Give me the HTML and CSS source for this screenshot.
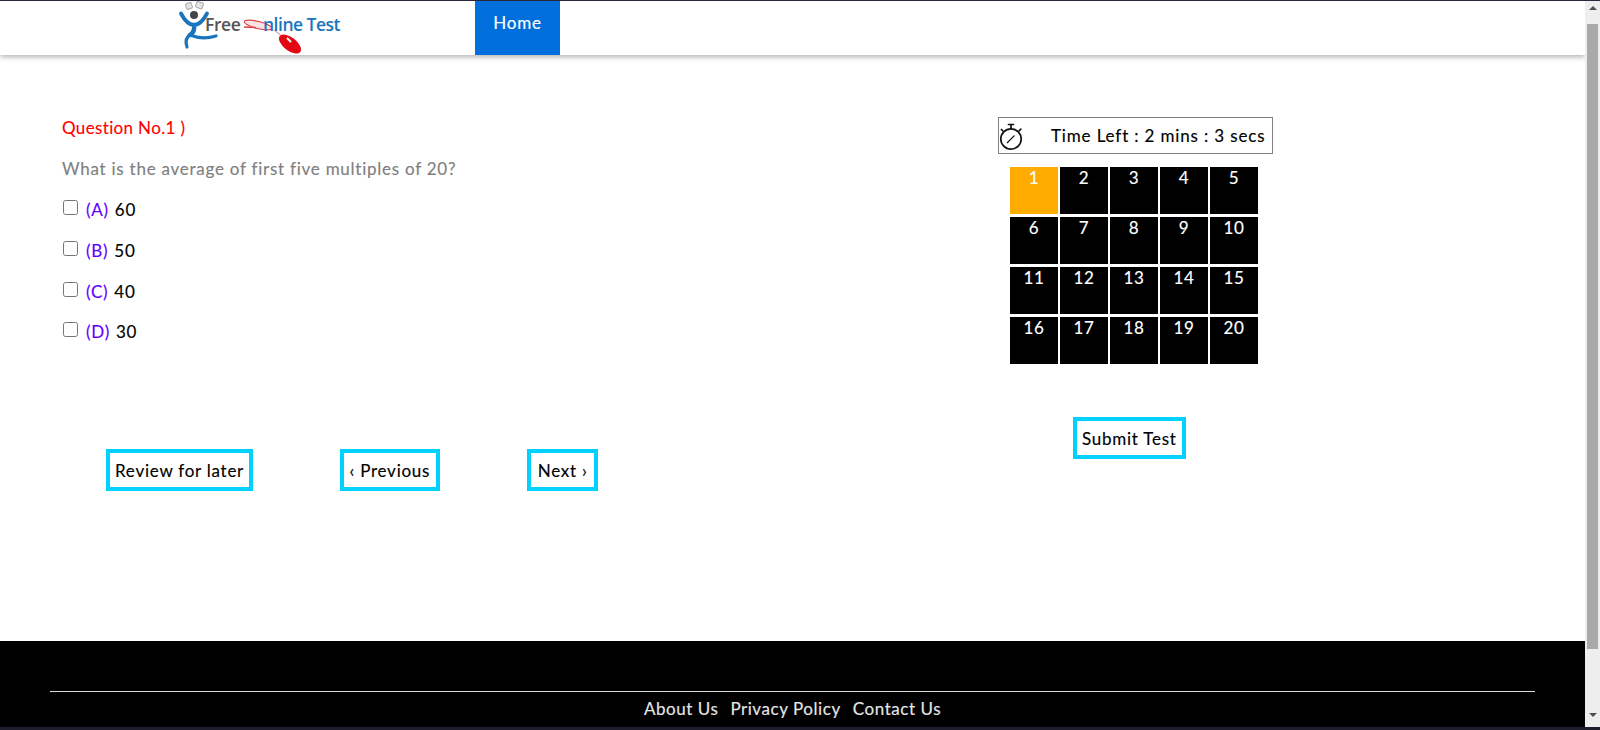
FILE: index.html
```html
<!DOCTYPE html>
<html lang="en">
<head>
<meta charset="utf-8">
<title>Free Online Test</title>
<link rel="stylesheet" href="styles.css">
</head>
<body>
<div class="window">
  <div class="page">
    <header class="header">
      <a class="logo" href="#">
        <svg class="logo-svg" viewBox="0 0 180 56" width="180" height="56">
          <g fill="#e4e4e4" stroke="#a8a8a8" stroke-width="1">
            <rect x="16" y="3" width="6" height="6" rx="1.5" transform="rotate(-20 19 6)"/>
            <rect x="26" y="2" width="7" height="6" rx="1.5" transform="rotate(20 29 5)"/>
          </g>
          <circle cx="24" cy="15" r="4" fill="#444"/>
          <g fill="none" stroke="#1b75bc" stroke-linecap="round">
            <path stroke-width="3.8" d="M11 13.5 Q17 25 24 25 Q31 25 37 13.5"/>
            <path stroke-width="4.4" d="M24 25 Q25 32 20 35"/>
            <path stroke-width="3.2" d="M20 35 Q32 40 46 36"/>
            <path stroke-width="3.2" d="M21 34 Q14 38 17 47"/>
          </g>
          <text class="logo-free" x="35" y="31">Free</text>
          <ellipse cx="88" cy="25" rx="14" ry="3.6" transform="rotate(14 88 25)" fill="#fbe3e3" stroke="#e0404a" stroke-width="1.2"/>
          <path d="M74 27 L86 27.5" stroke="#e0404a" stroke-width="1.4"/>
          <text class="logo-test" x="93" y="31">nline Test</text>
          <path d="M104 30 L113 37" stroke="#c86070" stroke-width="0.8"/>
          <ellipse cx="120" cy="44" rx="13" ry="6.6" transform="rotate(38 120 44)" fill="#e30613"/>
          <path d="M117 38 L121 42" stroke="#fff" stroke-width="2"/>
        </svg>
      </a>
      <nav class="nav"><a class="nav-home" href="#">Home</a></nav>
    </header>

    <main class="main">
      <section class="quiz">
        <p class="q-no">Question No.1 )</p>
        <p class="q-text">What is the average of first five multiples of 20?</p>
        <label class="opt"><input class="chk" type="checkbox"><span class="opt-key">(A)</span> 60</label>
        <label class="opt"><input class="chk" type="checkbox"><span class="opt-key">(B)</span> 50</label>
        <label class="opt"><input class="chk" type="checkbox"><span class="opt-key">(C)</span> 40</label>
        <label class="opt"><input class="chk" type="checkbox"><span class="opt-key">(D)</span> 30</label>
        <div class="actions">
          <button class="btn" type="button">Review for later</button>
          <button class="btn btn-prev" type="button">‹ Previous</button>
          <button class="btn btn-next" type="button">Next ›</button>
        </div>
      </section>

      <aside class="side">
        <div class="timer">
          <svg class="watch" viewBox="0 0 26 30" width="26" height="30">
            <g fill="none" stroke="#111" stroke-width="1.7">
              <circle cx="12" cy="18" r="10.2"/>
              <path d="M12 7.5V4.5M9.5 3.5h5M20 10l1.8-1.8M3.9 10L2.4 8.5" stroke-linecap="round"/>
              <path d="M8 22L15.5 14.5" stroke-width="1.1"/>
            </g>
          </svg>
          <span class="timer-text">Time Left : 2 mins : 3 secs</span>
        </div>
        <div class="grid">
          <a class="cell cell-on">1</a><a class="cell">2</a><a class="cell">3</a><a class="cell">4</a><a class="cell">5</a>
          <a class="cell">6</a><a class="cell">7</a><a class="cell">8</a><a class="cell">9</a><a class="cell">10</a>
          <a class="cell">11</a><a class="cell">12</a><a class="cell">13</a><a class="cell">14</a><a class="cell">15</a>
          <a class="cell">16</a><a class="cell">17</a><a class="cell">18</a><a class="cell">19</a><a class="cell">20</a>
        </div>
        <button class="btn btn-submit" type="button">Submit Test</button>
      </aside>
    </main>

    <footer class="footer">
      <hr class="rule">
      <nav class="foot-links">
        <a href="#">About Us</a><a href="#">Privacy Policy</a><a href="#">Contact Us</a>
      </nav>
    </footer>
  </div>

  <div class="scrollbar">
    <span class="arrow arrow-up"></span>
    <span class="thumb"></span>
    <span class="arrow arrow-down"></span>
  </div>
</div>
<div class="strip"></div>
</body>
</html>
```

FILE: styles.css
```css
* { box-sizing: border-box; }
html, body { margin: 0; height: 730px; overflow: hidden; background: #fff; }
body { font-family: "Lato", "Noto Sans", sans-serif; font-size: 17px; letter-spacing: 0.75px; color: #000; -webkit-text-stroke: 0.15px currentColor; }
a { color: inherit; text-decoration: none; }

.window { display: flex; height: 727px; border-top: 1px solid #2a2a3c; }
.page { flex: 1; min-width: 0; display: flex; flex-direction: column; }

.header { height: 54px; flex: none; display: flex; padding-left: 170px; background: #fff; box-shadow: 0 2px 5px rgba(0,0,0,.3); }
.logo { display: block; width: 180px; height: 55px; overflow: hidden; margin-top: -1px; }
.logo-svg { display: block; }
.logo-free { font: 600 17.5px "Open Sans", sans-serif; fill: #555; letter-spacing: -0.4px; }
.logo-test { font: 600 17.5px "Open Sans", sans-serif; fill: #1b75bc; letter-spacing: -0.5px; }
.nav { margin-left: 125px; }
.nav-home { display: block; width: 85px; height: 54px; background: #006fdc; color: #fff; text-align: center; line-height: 43px; }

.main { flex: 1; display: flex; }
.quiz { width: 998px; padding: 61px 0 0 62px; }
.q-no { margin: 0; height: 41px; line-height: 24px; color: #f00; letter-spacing: 0.35px; }
.q-text { margin: 0; height: 41px; line-height: 24px; color: #808080; }
.opt { display: flex; align-items: flex-start; height: 40.8px; line-height: 24px; }
.chk { width: 15px; height: 15px; margin: 2px 8px 0 1px; }
.opt-key { color: #6200ff; margin-right: 6px; }

.actions { display: flex; gap: 86.5px; margin: 88px 0 0 44px; }
.btn { height: 42px; padding: 0 5px; background: #fff; border: 4px solid #00d2ff; font: inherit; letter-spacing: inherit; color: #000; }
.btn-prev { padding: 0 6px; }
.btn-next { padding: 0 7px; }

.side { flex: 1; padding-top: 62px; display: flex; flex-direction: column; align-items: flex-start; }
.timer { width: 275px; height: 37px; border: 1px solid #808080; display: flex; align-items: center; }
.watch { flex: none; }
.timer-text { margin-left: 26px; white-space: nowrap; letter-spacing: 0.85px; }
.grid { display: grid; grid-template-columns: repeat(5, 48px); grid-auto-rows: 47px; column-gap: 2px; row-gap: 3px; margin: 13px 0 0 12px; }
.cell { background: #000; color: #fff; text-align: center; line-height: 22px; }
.cell-on { background: #ffab00; }
.btn-submit { margin: 53px 0 0 75px; }

.footer { height: 86px; flex: none; background: #000; padding-top: 50px; color: #e6e6e6; letter-spacing: 0.56px; }
.rule { margin: 0 50px; height: 1px; border: 0; background: #ddd; }
.foot-links { display: flex; justify-content: center; gap: 12px; line-height: 34px; }

.scrollbar { width: 15px; flex: none; background: #eee; display: flex; flex-direction: column; align-items: center; padding-top: 5px; }
.arrow { width: 0; height: 0; border-left: 4px solid transparent; border-right: 4px solid transparent; flex: none; }
.arrow-up { border-bottom: 4px solid #505050; }
.arrow-down { border-top: 4px solid #505050; margin-top: 64px; }
.thumb { width: 11px; height: 625px; background: #a9a9a9; margin-top: 14px; flex: none; }
.strip { height: 3px; background: #1c1c2a; }
```
